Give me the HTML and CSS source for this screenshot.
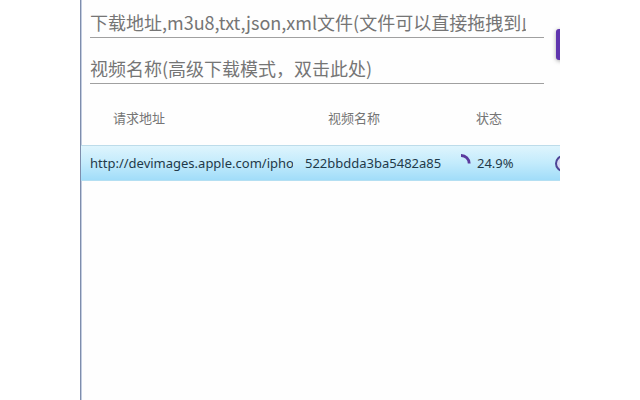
FILE: index.html
```html
<!DOCTYPE html>
<html lang="zh-CN">
<head>
    <meta charset="UTF-8">
    <meta name="viewport" content="width=device-width, initial-scale=1.0">
    <title>M3U8 下载器</title>
    <link rel="stylesheet" href="styles.css">
</head>
<body>
    <main class="window">
        <form class="download-form">
            <div class="fields">
                <input type="text" class="field" aria-label="下载地址" placeholder="下载地址,m3u8,txt,json,xml文件(文件可以直接拖拽到此处)">
                <input type="text" class="field" aria-label="视频名称" placeholder="视频名称(高级下载模式，双击此处)">
            </div>
            <button type="button" class="add-btn" aria-label="添加"></button>
        </form>

        <table class="task-table">
            <thead>
                <tr>
                    <th class="col-url">请求地址</th>
                    <th class="col-name">视频名称</th>
                    <th class="col-status">状态</th>
                    <th class="col-action"></th>
                </tr>
            </thead>
            <tbody>
                <tr class="task selected">
                    <td><div class="clip">http://devimages.apple.com/ipho</div></td>
                    <td><div class="clip">522bbdda3ba5482a85</div></td>
                    <td>
                        <div class="status">
                            <svg class="progress" viewBox="0 0 10 18" aria-hidden="true">
                                <path d="M0 1.500A8 8 0 0 1 8.200 9.500" fill="none" stroke="#5b3a9e" stroke-width="2.800"/>
                            </svg>
                            <span>24.9%</span>
                        </div>
                    </td>
                    <td class="action"><button type="button" class="round-btn" aria-label="操作"></button></td>
                </tr>
            </tbody>
        </table>
    </main>
</body>
</html>
```

FILE: styles.css
```css
:root {
    --accent: #5f35ae;
    --hint: #757575;
    --line: #a0a0a0;
    --text: #1f3a4a;
}

* {
    box-sizing: border-box;
}

body {
    margin: 0;
    background: #fff;
    font-family: "Noto Sans", "Noto Sans CJK SC", sans-serif;
}

.window {
    min-height: 100vh;
    margin: 0 80px;
    border-left: 1px solid #7e8dac;
    box-shadow: inset 1px 0 0 #c3cde0;
    background: #fefefe;
    overflow: hidden;
}

.download-form {
    display: flex;
    align-items: flex-start;
    gap: 12px;
    padding: 8px 0 0 9px;
}

.fields {
    display: flex;
    flex: 1;
    flex-direction: column;
    gap: 16px;
    min-width: 0;
}

.field {
    width: 100%;
    height: 30px;
    padding: 0 18px 2px 0;
    border: none;
    border-bottom: 1px solid var(--line);
    background: transparent;
    color: #333;
    font-family: "Noto Sans CJK SC", sans-serif;
    font-size: 18px;
}

.field::placeholder {
    color: var(--hint);
    opacity: 1;
}

/* runs past the right edge of the window */
.add-btn {
    flex: none;
    width: 88px;
    height: 31px;
    margin: 21px -84px 0 0;
    border: none;
    border-radius: 3px;
    background: var(--accent);
    box-shadow: 0 1px 4px rgba(0, 0, 0, 0.35);
    cursor: pointer;
}

.task-table {
    width: 100%;
    min-width: 560px;
    margin-top: 8px;
    table-layout: fixed;
    border-collapse: collapse;
}

.task-table th {
    height: 53px;
    padding: 0 0 2px 32px;
    color: var(--hint);
    font-size: 13px;
    font-weight: normal;
    text-align: left;
}

.task-table .col-url {
    width: 215px;
}

.task-table .col-name {
    width: 148px;
}

.task-table .col-status {
    width: 111px;
}

.task-table td {
    height: 36px;
    padding: 0 3px 0 9px;
    color: var(--text);
    font-size: 13px;
}

.task-table .action {
    padding: 0;
}

.selected {
    background: linear-gradient(#e0f5fd, #c3ebfc 50%, #9fdcf9);
    box-shadow: inset 0 1px 0 #bddcea, inset 0 -1px 0 #b4dff2;
}

.clip {
    overflow: hidden;
    white-space: nowrap;
}

.status {
    display: flex;
    align-items: center;
    gap: 6px;
    padding-left: 8px;
}

.progress {
    width: 10px;
    height: 18px;
}

.round-btn {
    display: block;
    width: 17px;
    height: 17px;
    padding: 0;
    border: 2px solid #4d4496;
    border-radius: 50%;
    background: #d9d9f3;
    cursor: pointer;
}
```
